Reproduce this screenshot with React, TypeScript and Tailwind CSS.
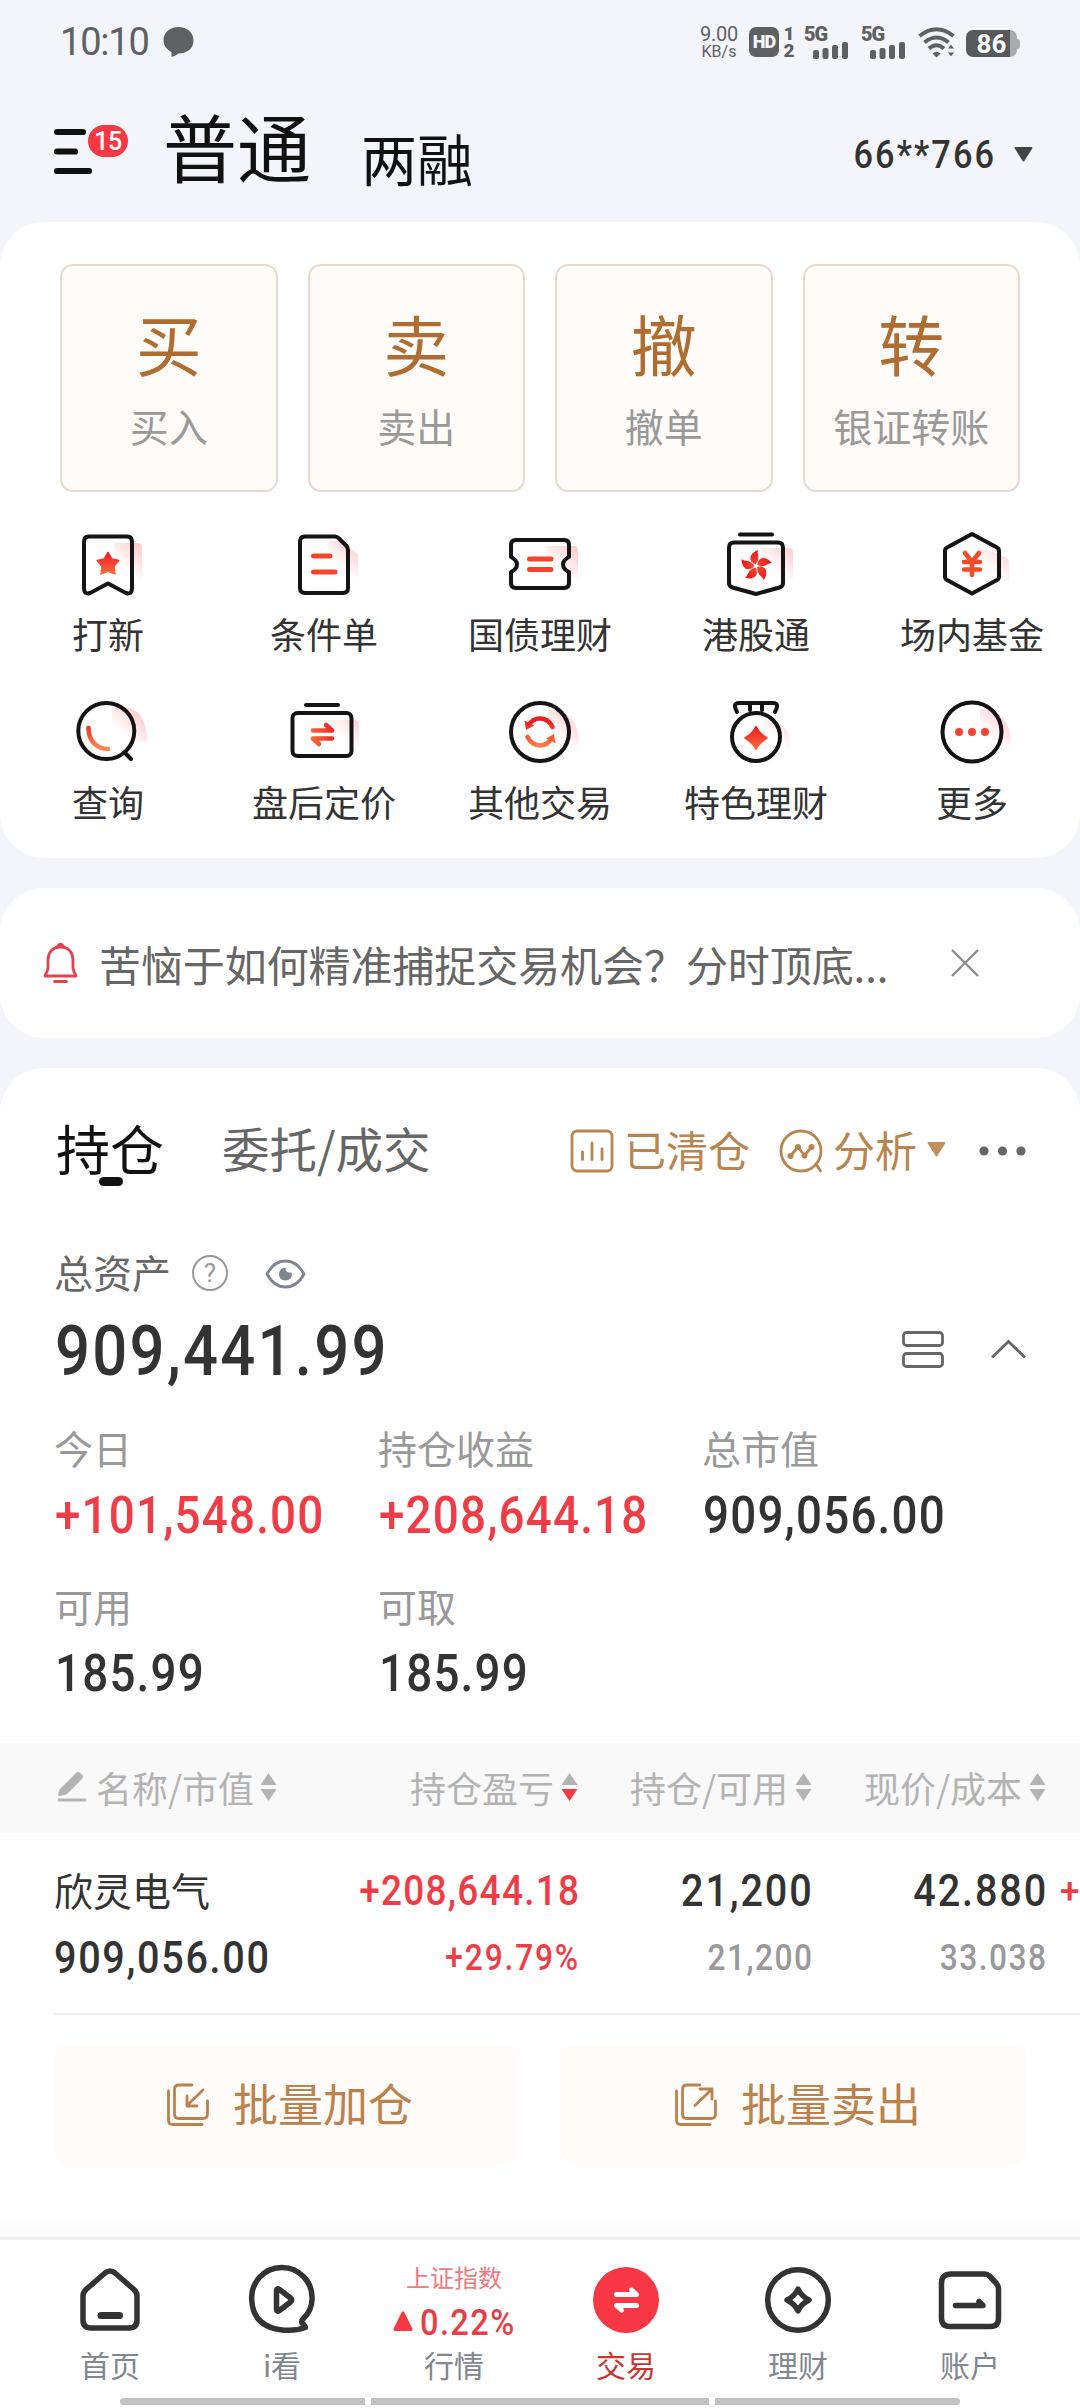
import type { ReactNode } from 'react';

const CJK = "font-['Noto_Sans_CJK_SC',sans-serif]";
const NUM = "font-['Roboto',sans-serif] font-medium";

// Narrowed figures, anchored to the left or right edge of their column
const NUM_L = `${NUM} inline-block origin-left scale-x-[0.88] translate-y-px`;
const NUM_R = `${NUM} inline-block origin-right scale-x-[0.88] translate-x-[2px] translate-y-px`;

const TRADE_BUTTONS = [
  { glyph: '买', label: '买入' },
  { glyph: '卖', label: '卖出' },
  { glyph: '撤', label: '撤单' },
  { glyph: '转', label: '银证转账' },
];

interface MenuEntry {
  label: string;
  shadow: string;
  icon: ReactNode;
}

const PETAL = 'M35.5 35.500 C27.500 32 29 24.500 38 21 C36.500 26 41 29 35.500 35.500 Z';

const MENU: MenuEntry[] = [
  {
    label: '打新',
    shadow: 'M42 14 H66 Q70 14 70 19 V52 H42 Z',
    icon: (
      <>
        <path d="M17 7.5 H55 Q60 7.5 60 12.5 V59 Q60 66 54 64 L36 54.5 L18 64 Q12 66 12 59 V12.5 Q12 7.5 17 7.5 Z" />
        <path d="M36 23.5 L39.8 30 L46.8 31.6 L42 37.2 L43 45 L36 42.3 L29 45 L30 37.2 L25.2 31.6 L32.2 30 Z" fill="url(#hot)" stroke="url(#hot)" strokeWidth="1.5" />
      </>
    ),
  },
  {
    label: '条件单',
    shadow: 'M40 12 H54 L70 26 V56 H40 Z',
    icon: (
      <>
        <path d="M17 7.5 H47 Q49 7.5 51 9.5 L58.5 17 Q60 19 60 21 V59 Q60 64 55 64 H17 Q12 64 12 59 V12.5 Q12 7.5 17 7.5 Z" />
        <path d="M25.5 27 H42 M25.5 43 H47" stroke="#f5432d" strokeWidth="5" />
      </>
    ),
  },
  {
    label: '国债理财',
    shadow: 'M42 17 H70 Q74 17 74 22 V48 H42 Z',
    icon: (
      <>
        <path d="M12 11 H60 Q65 11 65 16 V28 Q59 31 59 35.5 Q59 40 65 43 V54 Q65 59 60 59 H12 Q7 59 7 54 V43 Q13 40 13 35.5 Q13 31 7 28 V16 Q7 11 12 11 Z" />
        <path d="M25.5 30 H47 M25.5 40.5 H47" stroke="#f5432d" strokeWidth="5" />
      </>
    ),
  },
  {
    label: '港股通',
    shadow: 'M38 19 H69 Q73 19 73 24 V50 H38 Z',
    icon: (
      <>
        <path d="M20 5.5 H52" />
        <path d="M14 13.5 H58 Q63 13.5 63 18.5 V54 Q63 57.5 59.5 58.5 L36 65 L12.5 58.5 Q9 57.5 9 54 V18.5 Q9 13.5 14 13.5 Z" />
        <g fill="url(#hot)" stroke="none">
          <path d={PETAL} />
          <path d={PETAL} transform="rotate(72 36 37)" />
          <path d={PETAL} transform="rotate(144 36 37)" />
          <path d={PETAL} transform="rotate(216 36 37)" />
          <path d={PETAL} transform="rotate(288 36 37)" />
        </g>
      </>
    ),
  },
  {
    label: '场内基金',
    shadow: 'M40 18 L60 24 Q73 28 73 34 V58 H40 Z',
    icon: (
      <>
        <path d="M36 5 L61 18.5 Q63 19.5 63 22 V47.5 Q63 50 61 51 L36 64.5 L11 51 Q9 50 9 47.5 V22 Q9 19.5 11 18.5 Z" />
        <path d="M29 24 L36 33 L43 24 M28 33 H44 M28 40.5 H44 M36 33 V46" stroke="#f84b2c" strokeWidth="4.600" />
      </>
    ),
  },
  {
    label: '查询',
    shadow: 'M40 10 Q75 5 75 45 H40 Z',
    icon: (
      <>
        <path d="M53 56 L59 62" />
        <circle cx="34.300" cy="34" r="28" />
        <path d="M16.500 31 C16.500 43 24 52 36 52" stroke="url(#hot)" strokeWidth="4.600" />
      </>
    ),
  },
  {
    label: '盘后定价',
    shadow: 'M38 23 H66 Q71 23 71 28 V52 H38 Z',
    icon: (
      <>
        <path d="M18 8 H50" />
        <rect x="4.500" y="16" width="59" height="43" rx="5" />
        <path d="M25 33.500 H44 L38 28 M44 41.500 H25 L31 47" stroke="url(#swap)" strokeWidth="4.600" />
      </>
    ),
  },
  {
    label: '其他交易',
    shadow: 'M44 12 Q75 14 75 48 H44 Z',
    icon: (
      <>
        <circle cx="36" cy="35" r="29" />
        <path d="M24.500 28.500 C30 19 43 19 48.500 30" stroke="url(#hot)" strokeWidth="4.600" />
        <path d="M23.500 40 C29 51 42 51 47.500 41.500" stroke="url(#hot)" strokeWidth="4.600" />
        <path d="M20.500 23.500 L22 33 L30 28.500 Z M51.500 46.500 L50 37 L42 41.500 Z" fill="url(#hot)" stroke="none" />
      </>
    ),
  },
  {
    label: '特色理财',
    shadow: 'M44 22 Q71 24 71 52 H44 Z',
    icon: (
      <>
        <path d="M17 15 Q12 6 19 6 H53 Q60 6 55 15 M30 7 V13 M42 7 V13" />
        <circle cx="36" cy="40" r="24" />
        <path d="M36 29.500 Q39 36 47 41 Q39 46 36 52.500 Q33 46 25 41 Q33 36 36 29.500 Z" fill="url(#gem)" stroke="url(#gem)" strokeWidth="1.500" />
      </>
    ),
  },
  {
    label: '更多',
    shadow: 'M44 12 Q75 14 75 48 H44 Z',
    icon: (
      <>
        <circle cx="36" cy="35" r="29.500" />
        <g fill="#f5432d" stroke="none">
          <circle cx="23" cy="35" r="4" />
          <circle cx="36" cy="35" r="4" />
          <circle cx="49" cy="35" r="4" />
        </g>
      </>
    ),
  },
];

const STATS = [
  { label: '今日', value: '+101,548.00', cls: 'text-[#ef3d47]' },
  { label: '持仓收益', value: '+208,644.18', cls: 'text-[#ef3d47]' },
  { label: '总市值', value: '909,056.00', cls: 'text-[#333]' },
  { label: '可用', value: '185.99', cls: 'text-[#333]' },
  { label: '可取', value: '185.99', cls: 'text-[#333]' },
];

function Signal() {
  return (
    <div className="flex h-[30px] w-[45px] flex-col">
      <span className="-mt-px font-['Roboto',sans-serif] text-[20px] leading-[17px] font-black tracking-[-1px]">5G</span>
      <svg className="-mt-px ml-[9px] h-[17px] w-[36px] shrink-0" viewBox="0 0 36 17" fill="currentColor">
        <rect x="0" y="8" width="6" height="9" rx="2" />
        <rect x="9.500" y="6" width="6" height="11" rx="2" />
        <rect x="19" y="3" width="6" height="14" rx="2" />
        <rect x="29" y="0" width="6" height="17" rx="2" />
      </svg>
    </div>
  );
}

function StatusBar() {
  return (
    <div className="flex h-[84px] items-center pr-[60px] pl-[60px] text-[#5f6062]">
      <span className="font-['Roboto',sans-serif] text-[38px] leading-none tracking-[-1.200px]">10:10</span>
      <svg className="-mt-px ml-[14px] h-[30px] w-[31px]" viewBox="0 0 31 30" fill="currentColor">
        <path d="M15.500 0 C24 0 30.500 5.500 30.500 13.500 C30.500 21.500 24 26.500 15.500 26.500 C13 28.500 11 29 8.500 30 V25 C3.500 22.500 .5 18.500 .5 13.500 C.5 5.500 7 0 15.500 0 Z" />
      </svg>
      <div className="ml-auto flex h-[30px] items-start">
        <div className="flex w-[40px] flex-col items-center font-['Roboto',sans-serif]">
          <span className="text-[20px] leading-[15px] tracking-[-0.300px]">9.00</span>
          <span className="mt-[3px] text-[16px] leading-[14px]">KB/s</span>
        </div>
        <div className="ml-[10px] flex h-[30px] w-[30px] items-center justify-center rounded-[7px] bg-[#5f6062] font-['Roboto',sans-serif] text-[18px] leading-none font-black tracking-[-1px] text-[#f3f5fa]">HD</div>
        <div className="ml-[4px] flex w-[12px] flex-col items-center font-['Roboto',sans-serif] text-[19px] leading-[14px] font-black">
          <span>1</span>
          <span className="mt-[3px]">2</span>
        </div>
        <div className="ml-[9px]"><Signal /></div>
        <div className="ml-[12px]"><Signal /></div>
        <svg className="ml-[12px] h-[31px] w-[38px]" viewBox="0 0 38 31" fill="none" stroke="currentColor" strokeWidth="4">
          <path d="M1.500 9 Q18.500 -4.500 35.500 9" />
          <path d="M6.500 15.500 Q18.500 5.500 30.500 15.500" />
          <path d="M11 21.500 Q18.500 15 26 21.500" />
          <path d="M14.500 26.500 Q18.500 23 22.500 26.500 L18.500 30.500 Z" fill="currentColor" stroke="none" />
          <path d="M29 22 L33 17 L37 22 Z M29 25 L33 30 L37 25 Z" fill="currentColor" stroke="#f3f5fa" strokeWidth="1" />
        </svg>
        <div className="mt-[3px] ml-[10px] flex items-center">
          <div className="flex h-[27px] w-[51px] items-center justify-center rounded-[7px] bg-[linear-gradient(90deg,#58595b_86%,#a9aaad_86%)] font-['Roboto',sans-serif] text-[26px] leading-none font-bold text-white">86</div>
          <div className="h-[10px] w-[3px] rounded-r-[3px] bg-[#a9aaad]" />
        </div>
      </div>
    </div>
  );
}

function Header() {
  return (
    <div className="flex h-[138px] items-start pl-[54px] text-[#111]">
      <div className="relative mt-[44px] w-[109px]">
        <svg className="h-[46px] w-[40px]" viewBox="0 0 40 46" fill="none" stroke="currentColor" strokeWidth="6.200" strokeLinecap="round">
          <path d="M3 4 H29 M3 23.500 H21 M3 43 H35" />
        </svg>
        <span className={`${NUM} absolute -top-[5px] left-[32px] flex h-[36px] w-[44px] items-center justify-center rounded-full border-2 border-[#f3f5fa] bg-[#f73844] text-[25px] leading-none tracking-[-0.500px] text-white`}>15</span>
      </div>
      <span className="mt-[24px] text-[74px] leading-none">普通</span>
      <span className="mt-[45px] ml-[50px] text-[56px] leading-none">两融</span>
      <span className={`${NUM_R} mt-[51px] ml-auto text-[39px] leading-none tracking-[2.400px] text-[#333]`}>66**766</span>
      <svg className="mt-[63px] mr-[47px] ml-[20px] h-[15px] w-[19px]" viewBox="0 0 19 15" fill="#444">
        <path d="M1.500 0 H17.500 Q19 0 18.200 1.500 L10.300 14 Q9.500 15 8.700 14 L.8 1.500 Q0 0 1.500 0 Z" />
      </svg>
    </div>
  );
}

function MenuIcon({ entry }: { entry: MenuEntry }) {
  return (
    <div className="flex h-[122px] flex-col items-center">
      <svg className="h-[72px] w-[72px] shrink-0 overflow-visible" viewBox="0 0 72 72" fill="none" stroke="#141414" strokeWidth="4" strokeLinecap="round" strokeLinejoin="round">
        <path d={entry.shadow} fill="url(#blush)" stroke="none" />
        {entry.icon}
      </svg>
      <span className="mt-[14px] text-[36px] leading-none whitespace-nowrap text-[#333]">{entry.label}</span>
    </div>
  );
}

function Notice() {
  return (
    <div className="mt-[30px] flex h-[150px] items-center rounded-[44px] bg-white pl-[43px]">
      <svg className="h-[42px] w-[35px]" viewBox="0 0 35 42" fill="none" stroke="#e2434c" strokeWidth="2.800" strokeLinejoin="round" strokeLinecap="round">
        <path d="M14 5.500 Q17.500 -1 21 5.500" />
        <path d="M17.500 5 C9 5 5 11 5 18 V26 Q4.500 29 2 34 H33 Q30.500 29 30 26 V18 C30 11 26 5 17.500 5 Z" />
        <path d="M11.500 39.500 H23.500" />
      </svg>
      <span className="mt-[2px] ml-[21px] w-[800px] text-[42px] leading-none tracking-[-0.080px] whitespace-nowrap text-[#666]">苦恼于如何精准捕捉交易机会？分时顶底...</span>
      <svg className="ml-[52px] h-[28px] w-[28px]" viewBox="0 0 28 28" fill="none" stroke="#8c8c8c" strokeWidth="2.400">
        <path d="M1 1 L27 27 M27 1 L1 27" />
      </svg>
    </div>
  );
}

function PositionTabs() {
  return (
    <div className="flex h-[160px] items-center pl-[56px]">
      <div className="relative text-[54px] leading-none text-[#111]">
        持仓
        <span className="absolute -bottom-[11px] left-[43px] h-[9px] w-[24px] rounded-full bg-[#111]" />
      </div>
      <span className="ml-[58px] text-[47.500px] leading-none text-[#666]">委托/成交</span>
      <div className="mr-[54px] ml-auto flex items-center text-[#b9854f]">
        <svg className="mt-[5px] h-[44px] w-[44px]" viewBox="0 0 44 44" fill="none" stroke="currentColor" strokeWidth="2.800" strokeLinecap="round">
          <rect x="2" y="2" width="40" height="40" rx="5" />
          <path d="M12.500 23 V30.500 M22 14 V30.500 M32 20 V30.500" />
        </svg>
        <span className="mt-[2px] ml-[10px] text-[42px] leading-none">已清仓</span>
        <svg className="mt-[5px] ml-[29px] h-[44px] w-[44px]" viewBox="0 0 44 44" fill="none" stroke="currentColor" strokeWidth="2.800" strokeLinecap="round" strokeLinejoin="round">
          <circle cx="22" cy="22" r="20" />
          <path d="M37 35 L41.500 42" />
          <path d="M11.500 27 L19 18 L25.500 26.500 L32.500 18" />
          <g fill="currentColor" stroke="none">
            <circle cx="11.500" cy="27" r="3" />
            <circle cx="19" cy="18" r="3" />
            <circle cx="25.500" cy="26.500" r="3" />
            <circle cx="32.500" cy="18" r="3" />
          </g>
        </svg>
        <span className="mt-[2px] ml-[10px] text-[42px] leading-none">分析</span>
        <svg className="mt-[3px] ml-[10px] h-[15px] w-[19px]" viewBox="0 0 19 15" fill="#c08d5c">
          <path d="M1.500 0 H17.500 Q19 0 18.200 1.500 L10.300 14 Q9.500 15 8.700 14 L.8 1.500 Q0 0 1.500 0 Z" />
        </svg>
        <svg className="mt-[5px] ml-[33px] h-[10px] w-[47px]" viewBox="0 0 47 10" fill="#666">
          <circle cx="5" cy="5" r="4.600" />
          <circle cx="23.500" cy="5" r="4.600" />
          <circle cx="42" cy="5" r="4.600" />
        </svg>
      </div>
    </div>
  );
}

function Assets() {
  return (
    <>
      <div className="mt-[24px] flex h-[38px] items-center pl-[54px]">
        <span className="text-[39px] leading-none text-[#666]">总资产</span>
        <div className="mt-[3px] ml-[21px] flex h-[36px] w-[36px] items-center justify-center rounded-full border-[2.500px] border-[#999] font-['Roboto',sans-serif] text-[26px] leading-none text-[#999]">?</div>
        <svg className="mt-[5px] ml-[37px] h-[30px] w-[41px]" viewBox="0 0 41 30" fill="none" stroke="#7f8490" strokeWidth="2.800" strokeLinejoin="round">
          <path d="M2 15 Q9 2 20.500 2 Q32 2 39 15 Q32 28 20.500 28 Q9 28 2 15 Z" />
          <path d="M20.500 8.500 Q20 14 26.500 13.500 Q28 21 20.500 21.500 Q14 21 14 15 Q14.500 9 20.500 8.500 Z" fill="#7f8490" stroke="none" />
        </svg>
      </div>
      <div className="mt-[30px] flex h-[60px] items-center pl-[55px]">
        <span className={`${NUM_L} text-[70px] leading-none tracking-[2.600px] text-[#333]`}>909,441.99</span>
        <svg className="-mt-[2px] ml-auto h-[37px] w-[42px]" viewBox="0 0 42 37" fill="none" stroke="#666" strokeWidth="2.800">
          <rect x="1.500" y="1.500" width="39" height="13" rx="3" />
          <rect x="1.500" y="22.500" width="39" height="13" rx="3" />
        </svg>
        <svg className="-mt-[2px] mr-[53px] ml-[46px] h-[20px] w-[37px]" viewBox="0 0 37 20" fill="none" stroke="#666" strokeWidth="2.800">
          <path d="M2 18.500 L18.500 2.500 L35 18.500" />
        </svg>
      </div>
      <div className="mt-[48px] grid grid-cols-[324px_324px_324px] gap-y-[45px] pl-[54px]">
        {STATS.map((s) => (
          <div key={s.label} className="flex flex-col items-start">
            <span className="text-[39px] leading-none text-[#999]">{s.label}</span>
            <span className={`${NUM_L} mt-[22px] ml-px text-[52px] leading-none tracking-[1.350px] ${s.cls}`}>{s.value}</span>
          </div>
        ))}
      </div>
    </>
  );
}

function SortArrows({ active }: { active?: boolean }) {
  return (
    <svg className="h-[30px] w-[17px]" viewBox="0 0 17 30" fill="#b3b3b3">
      <path d="M8.500 1 L16.500 13 H.5 Z" />
      <path d="M8.500 29 L16.500 17 H.5 Z" fill={active ? '#f73844' : '#b3b3b3'} />
    </svg>
  );
}

const HEAD_CELL = 'flex w-[234px] shrink-0 items-center justify-end gap-[7px]';
const CELL = 'flex w-[234px] shrink-0 flex-col items-end gap-[23px]';

function Positions() {
  return (
    <>
      <div className="mt-[44px] flex h-[90px] items-center bg-[#f9f9f9] pb-[3px] text-[36px] leading-none whitespace-nowrap text-[#b3b3b3]">
        <div className="flex w-[344px] shrink-0 items-center pl-[57px]">
          <svg className="h-[31px] w-[30px]" viewBox="0 0 30 31" fill="#b3b3b3">
            <path d="M18.500 2.500 Q20.500 0 23 2 L24.500 3.300 Q27 5.500 25 8 L9.500 23.500 L2.500 25 Q1 25 1.200 23 L2.500 18.500 Z" />
            <rect x="1" y="27.500" width="28" height="3" />
          </svg>
          <span className="ml-[9px]">名称/市值</span>
          <span className="ml-[6px]"><SortArrows /></span>
        </div>
        <div className={HEAD_CELL}>持仓盈亏<SortArrows active /></div>
        <div className={HEAD_CELL}>持仓/可用<SortArrows /></div>
        <div className={HEAD_CELL}>现价/成本<SortArrows /></div>
      </div>
      <div className="flex h-[180px] overflow-hidden pt-[35px] whitespace-nowrap text-[#333]">
        <div className="flex w-[344px] shrink-0 flex-col items-start gap-[23px] pl-[54px]">
          <span className="-mt-px mb-px text-[39px] leading-[44px]">欣灵电气</span>
          <span className={`${NUM_L} text-[45px] leading-[44px] tracking-[1.900px]`}>909,056.00</span>
        </div>
        <div className={`${CELL} text-[#ef3d47]`}>
          <span className={`${NUM_R} text-[42px] leading-[44px] tracking-[1.450px]`}>+208,644.18</span>
          <span className={`${NUM_R} text-[36px] leading-[44px] tracking-[2.100px]`}>+29.79%</span>
        </div>
        <div className={CELL}>
          <span className={`${NUM_R} text-[45px] leading-[44px] tracking-[2.100px]`}>21,200</span>
          <span className={`${NUM_R} text-[36px] leading-[44px] tracking-[1.700px] text-[#999]`}>21,200</span>
        </div>
        <div className={CELL}>
          <span className={`${NUM_R} text-[45px] leading-[44px] tracking-[2.100px]`}>42.880</span>
          <span className={`${NUM_R} text-[36px] leading-[44px] tracking-[1.700px] text-[#999]`}>33.038</span>
        </div>
        <span className={`${NUM} mt-[2px] ml-[14px] text-[35px] leading-[44px] text-[#ef3d47]`}>+</span>
      </div>
      <div className="ml-[54px] h-[2px] bg-[#ececec]" />
    </>
  );
}

function BatchButton({ label, arrow }: { label: string; arrow: string }) {
  return (
    <div className="flex h-[119px] w-[463px] items-center rounded-[12px] bg-[#fefbf8] pl-[112px] text-[#b9824f]">
      <svg className="h-[43px] w-[42px]" viewBox="0 0 42 43" fill="none" stroke="currentColor" strokeWidth="2.800" strokeLinecap="round" strokeLinejoin="round">
        <path d="M25 2 H12 Q7.500 2 7.500 6.500 V31 Q7.500 35.500 12 35.500 H36 Q40.500 35.500 40.500 31 V18" />
        <path d="M1.500 8 V37 Q1.500 41.500 6 41.500 H35" />
        <path d={arrow} />
      </svg>
      <span className="-mt-[4px] ml-[24px] text-[45px] leading-none">{label}</span>
    </div>
  );
}

function NavItem({ label, children, active }: { label: string; children: ReactNode; active?: boolean }) {
  return (
    <div className="flex w-[172px] flex-col items-center pt-[24px]">
      <svg className="h-[72px] w-[72px]" viewBox="0 0 72 72" fill="none" stroke="#333" strokeWidth="5.500" strokeLinecap="round" strokeLinejoin="round">
        {children}
      </svg>
      <span className={`mt-[13px] text-[30px] leading-none ${active ? 'text-[#cb352f]' : 'text-[#82868e]'}`}>{label}</span>
    </div>
  );
}

function BottomNav() {
  return (
    <div className="flex h-[171px] flex-col border-t-[3px] border-[#efefef] bg-white">
      <div className="flex h-[139px] px-[24px]">
        <NavItem label="首页">
          <path d="M31 9 Q36 5 41 9 L60 25.500 Q63 28.500 63 32 V56 Q63 64 55 64 H17 Q9 64 9 56 V32 Q9 28.500 12 25.500 Z" />
          <path d="M27 51.500 H45.500" strokeWidth="7" />
        </NavItem>
        <NavItem label="i看">
          <path d="M56 59 Q55 57 57 55 Q66 46 66 35.500 A30.200 30.200 0 1 0 5.800 36.500 Q7 63 38 66.200 Q50 67 59.500 63.500 Q60 62.500 56 59 Z" />
          <path d="M30.500 27 Q30.500 23.500 33.500 25.500 L44.500 34 Q47 36 44.500 38 L33.500 46.500 Q30.500 48.500 30.500 45 Z" />
        </NavItem>
        <div className="flex w-[172px] flex-col items-center pt-[25px]">
          <span className="text-[24px] leading-none text-[#f0787f]">上证指数</span>
          <div className="mt-[14px] flex h-[36px] w-[123px] items-center">
            <svg className="h-[20px] w-[20px] shrink-0" viewBox="0 0 20 20" fill="#f73844">
              <path d="M8.800 1 Q10 -.5 11.200 1 L19.300 17.500 Q20 20 18 20 H2 Q0 20 .7 17.500 Z" />
            </svg>
            <span className={`${NUM_L} ml-[7px] text-[37px] leading-none tracking-[1.600px] text-[#e63e46]`}>0.22%</span>
          </div>
          <span className="mt-[10px] text-[30px] leading-none text-[#82868e]">行情</span>
        </div>
        <NavItem label="交易" active>
          <circle cx="36" cy="36" r="33" fill="#f83744" stroke="none" />
          <path d="M26.500 30.500 H46.500 L41.500 26 M46.500 41.500 H26.500 L31.500 46" stroke="#fff" strokeWidth="5" />
        </NavItem>
        <NavItem label="理财">
          <circle cx="36" cy="36" r="30.300" />
          <path d="M36 25 Q39 32 47 36 Q39 40 36 47 Q33 40 25 36 Q33 32 36 25 Z" />
        </NavItem>
        <NavItem label="账户">
          <path d="M17 10 H51 Q53.500 10 55.500 12 L62.500 19.500 Q64.500 22 64.500 25 V54 Q64.500 62.500 56.500 62.500 H16 Q7.500 62.500 7.500 54 V19 Q7.500 10 17 10 Z" />
          <path d="M21.500 41.500 H49 L45 37.500" />
        </NavItem>
      </div>
      <div className="mt-[19px] flex h-[7px] gap-[6px] pl-[120px]">
        <div className="w-[245px] rounded-l-full bg-[#c2c2c2]" />
        <div className="w-[338px] bg-[#c2c2c2]" />
        <div className="w-[245px] rounded-r-full bg-[#c2c2c2]" />
      </div>
    </div>
  );
}

export default function App() {
  return (
    <div className={`${CJK} flex h-[2408px] w-[1080px] flex-col overflow-hidden bg-[#f3f5fa]`}>
      {/* Shared icon gradients */}
      <svg className="absolute h-0 w-0" aria-hidden="true">
        <defs>
          <linearGradient id="hot" gradientUnits="userSpaceOnUse" x1="36" y1="24" x2="36" y2="52">
            <stop offset="0" stopColor="#ee1c1f" />
            <stop offset="1" stopColor="#fd8a4f" />
          </linearGradient>
          <linearGradient id="gem" gradientUnits="userSpaceOnUse" x1="36" y1="30" x2="36" y2="56">
            <stop offset="0" stopColor="#ee1c1f" />
            <stop offset="1" stopColor="#fd7a45" />
          </linearGradient>
          <linearGradient id="swap" gradientUnits="userSpaceOnUse" x1="22" y1="36" x2="46" y2="32">
            <stop offset="0" stopColor="#fa6a3c" />
            <stop offset="1" stopColor="#f02620" />
          </linearGradient>
          <linearGradient id="blush" gradientUnits="userSpaceOnUse" x1="76" y1="16" x2="54" y2="40">
            <stop offset="0" stopColor="#f8404a" stopOpacity="0.32" />
            <stop offset="1" stopColor="#f8404a" stopOpacity="0" />
          </linearGradient>
        </defs>
      </svg>

      <StatusBar />
      <Header />

      {/* Trade shortcuts */}
      <div className="h-[636px] rounded-[44px] bg-white pt-[42px]">
        <div className="flex gap-[30px] px-[60px]">
          {TRADE_BUTTONS.map((b) => (
            <div key={b.label} className="flex h-[228px] flex-1 flex-col items-center rounded-[13px] border-2 border-[#ead9cc] bg-[#fffbf8] pt-[43px]">
              <span className="text-[66px] leading-none text-[#b06d32]">{b.glyph}</span>
              <span className="mt-[31px] text-[39px] leading-none text-[#999]">{b.label}</span>
            </div>
          ))}
        </div>
        <div className="mt-[37px] grid grid-cols-5 gap-y-[46px]">
          {MENU.map((m) => (
            <MenuIcon key={m.label} entry={m} />
          ))}
        </div>
      </div>

      <Notice />

      {/* Portfolio */}
      <div className="mt-[30px] flex flex-1 flex-col rounded-t-[44px] bg-white">
        <PositionTabs />
        <Assets />
        <Positions />
        <div className="mt-[30px] flex gap-[45px] pl-[55px]">
          <BatchButton label="批量加仓" arrow="M36 7 L20 22.500 M20 13 V23 H30" />
          <BatchButton label="批量卖出" arrow="M20 22.500 L36 7 M25 6 H37 V16" />
        </div>
        <div className="mt-auto h-[24px] bg-[linear-gradient(180deg,#fff,#fafafa)]" />
      </div>

      <BottomNav />
    </div>
  );
}
